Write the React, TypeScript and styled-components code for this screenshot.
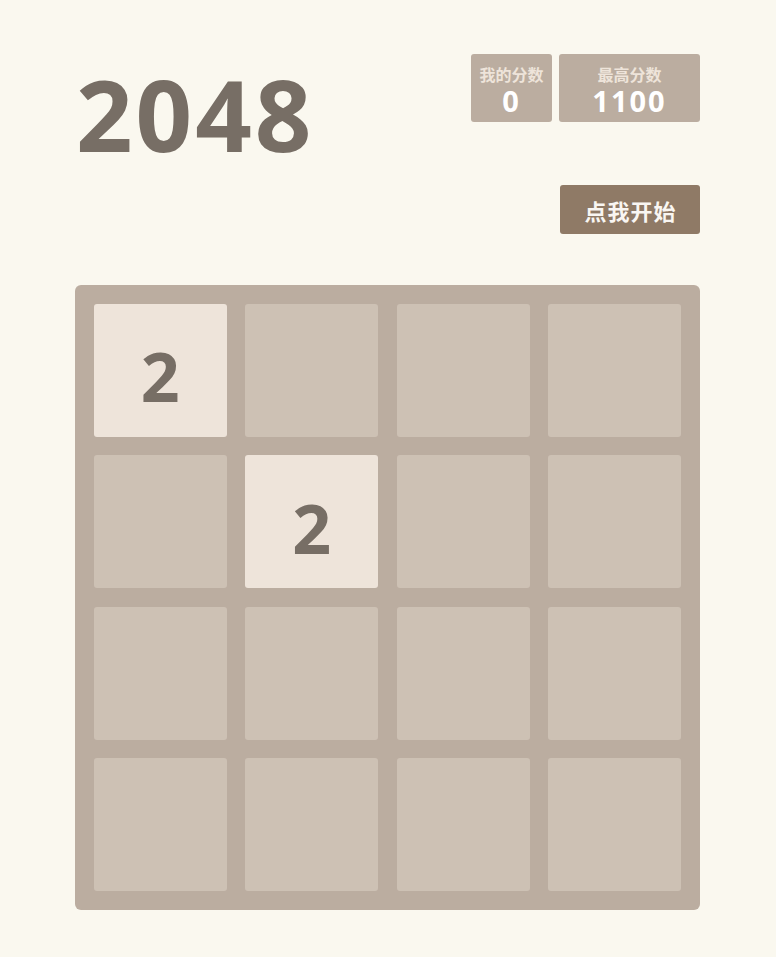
import styled, {createGlobalStyle} from 'styled-components';

const GlobalStyle = createGlobalStyle`
  html, body {
    margin: 0;
    padding: 0;
    background: #faf8ef;
  }
  body {
    font-family: "Open Sans", "Noto Sans CJK SC", sans-serif;
    color: #776e65;
  }
`;

const board: number[][] = [
    [2, 0, 0, 0],
    [0, 2, 0, 0],
    [0, 0, 0, 0],
    [0, 0, 0, 0],
];

export default function App() {
    return (
        <>
            <GlobalStyle/>
            <Container>
                <Header>
                    <Title>2048</Title>
                    <Side>
                        <Scores>
                            <ScoreBox $width={81}>
                                <ScoreLabel>我的分数</ScoreLabel>
                                <ScoreValue>0</ScoreValue>
                            </ScoreBox>
                            <ScoreBox $width={141}>
                                <ScoreLabel>最高分数</ScoreLabel>
                                <ScoreValue>1100</ScoreValue>
                            </ScoreBox>
                        </Scores>
                        <StartButton type="button">点我开始</StartButton>
                    </Side>
                </Header>

                <Board>
                    {board.flat().map((value, i) => (
                        <Cell key={i} $filled={value > 0}>
                            {value > 0 ? value : ''}
                        </Cell>
                    ))}
                </Board>
            </Container>
        </>
    );
}


const Container = styled.div`
  width: 625px;
  margin: 0 75px;
  padding-top: 54px;
`;

const Header = styled.div`
  display: flex;
  justify-content: space-between;
  align-items: flex-start;
`;

const Title = styled.h1`
  margin: 10px 0 0 1px;
  font-family: "Open Sans", sans-serif;
  font-weight: 700;
  font-size: 99px;
  line-height: 99px;
  letter-spacing: 3px;
  color: #776e65;
`;

const Side = styled.div`
  display: flex;
  flex-direction: column;
  align-items: flex-end;
`;

const Scores = styled.div`
  display: flex;
  gap: 7px;
`;

const ScoreBox = styled.div<{ $width: number }>`
  width: ${p => p.$width}px;
  height: 68px;
  background: #bbada0;
  border-radius: 3px;
  display: flex;
  flex-direction: column;
  align-items: center;
  padding-top: 11px;
  box-sizing: border-box;
`;

const ScoreLabel = styled.div`
  font-family: "Noto Sans CJK SC", sans-serif;
  font-size: 16px;
  font-weight: 700;
  line-height: 19px;
  color: #eee4da;
`;

const ScoreValue = styled.div`
  font-family: "Open Sans", sans-serif;
  font-size: 29px;
  font-weight: 700;
  line-height: 36px;
  letter-spacing: 2px;
  margin-top: -1px;
  color: #fff;
`;

const StartButton = styled.button`
  margin-top: 63px;
  width: 140px;
  height: 49px;
  padding: 0 0 0 1px;
  border: none;
  border-radius: 3px;
  background: #8f7a66;
  color: #f9f6f2;
  font-family: "Noto Sans CJK SC", sans-serif;
  font-size: 22px;
  font-weight: 700;
  letter-spacing: 1px;
  cursor: pointer;
`;

const Board = styled.div`
  margin-top: 51px;
  width: 625px;
  height: 625px;
  box-sizing: border-box;
  padding: 18.75px;
  background: #bbada0;
  border-radius: 6px;
  display: grid;
  grid-template-columns: repeat(4, 1fr);
  grid-template-rows: repeat(4, 1fr);
  gap: 18.75px;
`;

const Cell = styled.div<{ $filled: boolean }>`
  border-radius: 3px;
  background: ${p => p.$filled ? '#eee4da' : '#cdc1b4'};
  display: flex;
  align-items: center;
  justify-content: center;
  padding-top: 11px;
  font-family: "Open Sans", sans-serif;
  font-weight: 700;
  font-size: 68px;
  color: #776e65;
`;
